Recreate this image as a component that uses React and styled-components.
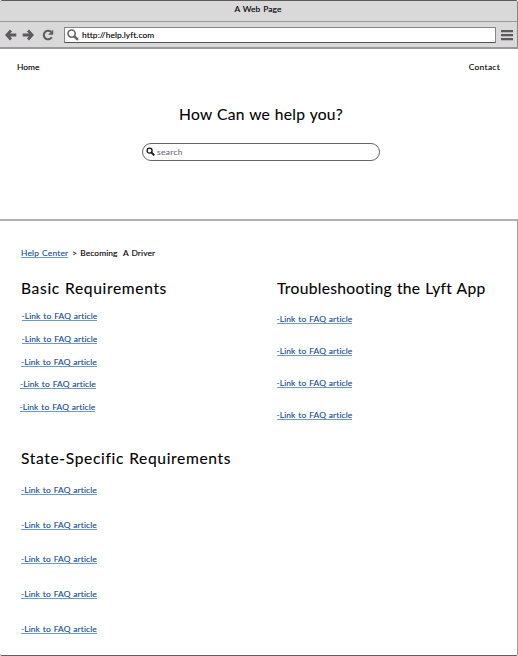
import React from 'react';
import styled, { createGlobalStyle } from 'styled-components';

const GlobalStyle = createGlobalStyle`
  * { box-sizing: border-box; }
  body { margin: 0; background: #fff; }
`;

const Window = styled.div`
  width: 518px;
  height: 656px;
  display: flex;
  flex-direction: column;
  overflow: hidden;
  background: #fff;
  color: #000;
  font: 8.4px/12px Lato, sans-serif;
  -webkit-text-stroke: 0.12px currentColor;
  word-spacing: 0.6px;
  white-space: pre;
  border-bottom: 1px solid #626064;
  border-radius: 2px;
`;

const Chrome = styled.header`
  height: 49px;
  flex: none;
  background: #d9d9d9;
  border-top: 1px solid #5c595d;
  border-right: 1px solid #858585;
  border-bottom: 2px solid #999;
  border-radius: 2px 2px 0 0;
`;

const TitleBar = styled.div`
  height: 21px;
  padding: 2px 1px 0 0;
  border-bottom: 1px solid #999;
  text-align: center;
`;

const Toolbar = styled.div`
  height: 25px;
  display: flex;
  align-items: center;
  padding: 0 4px 0 5px;
`;

const NavIcon = styled.svg`
  width: 12px;
  height: 12px;
  margin-right: ${(p) => p.$gap}px;
  flex: none;
  fill: none;
  stroke: #5c5a5d;
  stroke-width: 2.8;
`;

const AddressField = styled.div`
  flex: 1;
  height: 16px;
  display: flex;
  align-items: center;
  padding-left: 2px;
  background: #fff;
  border: 1px solid #858585;
  border-bottom-color: #555256;
`;

const MenuIcon = styled.svg`
  width: 12px;
  height: 12px;
  margin-left: 5px;
  fill: #5c5a5d;
`;

const Glass = styled.svg`
  width: ${(p) => p.$size}px;
  height: ${(p) => p.$size}px;
  margin-right: ${(p) => p.$gap}px;
  fill: none;
  stroke: ${(p) => p.$color};
`;

const Label = styled.span`
  letter-spacing: ${(p) => p.$track || 0}px;
`;

const Hero = styled.section`
  height: 170px;
  flex: none;
  display: flex;
  flex-direction: column;
  align-items: center;
`;

const Nav = styled.nav`
  width: 100%;
  display: flex;
  justify-content: space-between;
  padding: 12px 18px 0 17px;
`;

const Heading = styled.h2`
  margin: 0;
  height: 20px;
  font-size: 15.6px;
  line-height: 20px;
  font-weight: 400;
  letter-spacing: ${(p) => p.$track}px;
  -webkit-text-stroke: 0.1px currentColor;
`;

const HeroHeading = styled(Heading)`
  margin: 31px 0 19px 4px;
`;

const SearchField = styled.div`
  width: 238px;
  height: 18px;
  margin-left: 4px;
  display: flex;
  align-items: center;
  padding: 0 0 1px 3px;
  border: 1px solid #666;
  border-radius: 9px;
  color: #777281;
`;

const Content = styled.main`
  flex: 1;
  border-top: 2px solid #b0b0b0;
  border-right: 1px solid #999;
  padding: 26px 0 0 21px;
`;

const Breadcrumb = styled.div`
  height: 31px;
  display: flex;
  gap: 4px;
`;

const Link = styled.a`
  height: 11px;
  line-height: 12px;
  width: max-content;
  color: #164c8c;
  border-bottom: 1px solid #6f9ac6;
  letter-spacing: ${(p) => p.$track}px;
  margin-left: ${(p) => p.$shift || 0}px;
`;

const Columns = styled.div`
  display: grid;
  grid-template-columns: 256px 1fr;
  height: 170px;
`;

const LinkList = styled.div`
  display: flex;
  flex-direction: column;
  gap: ${(p) => p.$gap}px;
  padding-top: ${(p) => p.$top}px;
`;

const FaqSection = ({ title, track, gap, top, shifts }) => (
  <section>
    <Heading $track={track}>{title}</Heading>
    <LinkList $gap={gap} $top={top}>
      {shifts.map((shift, i) => (
        <Link key={i} $track={0.12} $shift={shift}>-Link to FAQ article</Link>
      ))}
    </LinkList>
  </section>
);

export default function App() {
  return (
    <Window>
      <GlobalStyle />
      <Chrome>
        <TitleBar><Label $track={0.1}>A Web Page</Label></TitleBar>
        <Toolbar>
          <NavIcon $gap={5} viewBox="0 0 12 12"><path d="M6 1.5 1.8 6 6 10.5M2 6h9.3" /></NavIcon>
          <NavIcon $gap={8} viewBox="0 0 12 12"><path d="M6 1.5 10.2 6 6 10.5M10 6H.7" /></NavIcon>
          <NavIcon $gap={10} viewBox="0 0 12 12">
            <path d="M9.8 8.2A4.3 4.3 0 1 1 9 2.8" strokeWidth="2.1" />
            <path d="M11.2 .6v5.1H6.2z" fill="#5c5a5d" stroke="none" />
          </NavIcon>
          <AddressField>
            <Glass $size={12} $gap={3} $color="#666367" viewBox="0 0 12 12">
              <circle cx="4.6" cy="4.6" r="3.6" strokeWidth="1.6" />
              <path d="m7.3 7.3 3.7 3.5" strokeWidth="2.4" />
            </Glass>
            <Label $track={0.08}>http://help.lyft.com</Label>
          </AddressField>
          <MenuIcon viewBox="0 0 12 12"><path d="M0 1h12v2.3H0zM0 5h12v2.3H0zM0 9h12v2.3H0z" /></MenuIcon>
        </Toolbar>
      </Chrome>
      <Hero>
        <Nav>
          <Label $track={0.02}>Home</Label>
          <Label $track={0.32}>Contact</Label>
        </Nav>
        <HeroHeading as="h1" $track={0.25}>How Can we help you?</HeroHeading>
        <SearchField>
          <Glass $size={9} $gap={2} $color="#111" viewBox="0 0 9 9">
            <circle cx="3.6" cy="3.6" r="2.5" strokeWidth="1.3" />
            <path d="m5.3 5.3 3 3" strokeWidth="1.8" />
          </Glass>
          <Label $track={0.35}>search</Label>
        </SearchField>
      </Hero>
      <Content>
        <Breadcrumb>
          <Link $track={0.2}>Help Center</Link>
          <Label $track={0.13}>{'> Becoming  A Driver'}</Label>
        </Breadcrumb>
        <Columns>
          <FaqSection title="Basic Requirements" track={0.64} gap={11.65} top={12.4} shifts={[0.5, 0.5, 0, -1, -1.5]} />
          <FaqSection title="Troubleshooting the Lyft App" track={0.32} gap={21} top={15} shifts={[-0.5, -0.5, -0.5, -0.5]} />
        </Columns>
        <FaqSection title="State-Specific Requirements" track={0.64} gap={23.65} top={16} shifts={[0, 0, 0, 0, 0]} />
      </Content>
    </Window>
  );
}
